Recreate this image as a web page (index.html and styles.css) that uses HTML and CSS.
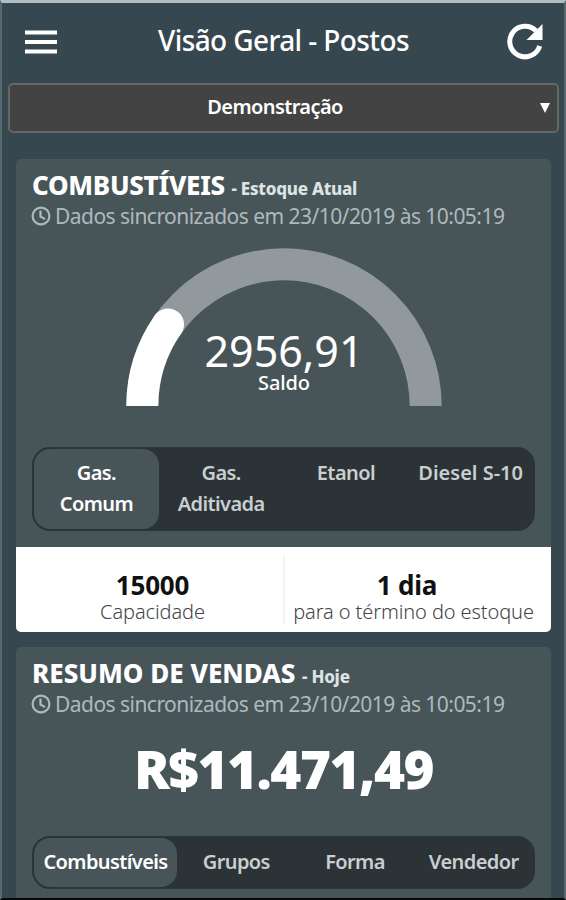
FILE: index.html
```html
<!DOCTYPE html>
<html lang="pt-BR">
<head>
    <meta charset="UTF-8">
    <meta name="viewport" content="width=device-width, initial-scale=1.0">
    <title>Visão Geral - Postos</title>
    <link rel="stylesheet" href="styles.css">
</head>
<body>
    <div class="app">
        <header class="topbar">
            <svg class="icon-menu" width="34" height="26" viewBox="0 0 34 26">
                <path d="M1 3.5h32M1 13h32M1 22.5h32" stroke="#fff" stroke-width="3.8"/>
            </svg>
            <h1>Visão Geral - Postos</h1>
            <svg class="icon-refresh" width="38" height="38" viewBox="0 0 38 38">
                <path d="M30 7.8A15.3 15.3 0 1 0 33.7 23" fill="none" stroke="#fff" stroke-width="5"/>
                <path d="M36.5 1v16H20.5z" fill="#fff"/>
            </svg>
        </header>

        <!-- Company -->
        <div class="select">
            <span class="select-value">Demonstração</span>
            <svg class="arrow" width="10" height="10" viewBox="0 0 10 10"><path d="M0 0h10L5 10z" fill="#fff"/></svg>
        </div>

        <!-- Stock -->
        <section class="card">
            <h2>COMBUSTÍVEIS <small>- Estoque Atual</small></h2>
            <p class="sync">
                <svg width="20" height="20" viewBox="0 0 20 20" fill="none" stroke="#aeb9bc" stroke-width="2.2">
                    <circle cx="10" cy="10" r="8.4"/>
                    <path d="M9.5 4.5v6l4.5 2.6"/>
                </svg>
                <span>Dados sincronizados em 23/10/2019 às 10:05:19</span>
            </p>
            <div class="gauge">
                <svg width="316" height="158" viewBox="0 0 316 158" fill="none" stroke-width="32">
                    <path d="M16.3 158A141.7 141.7 0 0 1 299.7 158" stroke="#92999c"/>
                    <path d="M16.3 158A141.7 141.7 0 0 1 42 76.4" stroke="#fff"/>
                    <circle cx="42" cy="76.4" r="16" fill="#fff" stroke="none"/>
                </svg>
                <div class="gauge-text">
                    <div class="gauge-value">2956,91</div>
                    <div class="gauge-label">Saldo</div>
                </div>
            </div>
            <div class="tabs">
                <div class="tab active">Gas.<br>Comum</div>
                <div class="tab">Gas.<br>Aditivada</div>
                <div class="tab">Etanol</div>
                <div class="tab diesel">Diesel S-10</div>
            </div>
            <div class="totals">
                <div class="total">
                    <strong>15000</strong>
                    <span>Capacidade</span>
                </div>
                <div class="total">
                    <strong class="days">1 dia</strong>
                    <span>para o término do estoque</span>
                </div>
            </div>
        </section>

        <!-- Sales -->
        <section class="card card-sales">
            <h2 class="sales-title">RESUMO DE VENDAS <small>- Hoje</small></h2>
            <p class="sync">
                <svg width="20" height="20" viewBox="0 0 20 20" fill="none" stroke="#aeb9bc" stroke-width="2.2">
                    <circle cx="10" cy="10" r="8.4"/>
                    <path d="M9.5 4.5v6l4.5 2.6"/>
                </svg>
                <span>Dados sincronizados em 23/10/2019 às 10:05:19</span>
            </p>
            <div class="amount">R$11.471,49</div>
            <div class="tabs tabs-sales">
                <div class="tab active">Combustíveis</div>
                <div class="tab">Grupos</div>
                <div class="tab">Forma</div>
                <div class="tab">Vendedor</div>
            </div>
        </section>
    </div>
</body>
</html>
```
FILE: styles.css
```css
* {
    box-sizing: border-box;
}
body {
    margin: 0;
    font-family: "Noto Sans", "Open Sans", sans-serif;
    color: #fff;
    background-color: #37474f;
}
h1, h2, p {
    margin: 0;
    white-space: nowrap;
}
svg {
    display: block;
    flex: none;
}
.app {
    height: 900px;
    overflow: hidden;
    border: 2px solid #58686f;
    border-top: 3px solid #b3bcbf;
    border-bottom: 2px solid #050809;
}
.topbar {
    display: flex;
    align-items: center;
    justify-content: space-between;
    height: 80px;
    padding: 0 20px 3px 22px;
}
.topbar h1 {
    padding: 0 0 3px 3px;
    font-size: 28px;
    font-weight: 500;
    line-height: 38px;
    letter-spacing: -0.6px;
}
.select {
    display: flex;
    align-items: center;
    height: 50px;
    margin: 0 5px 0 6px;
    padding: 0 7px 0 0;
    border: 2px solid #626866;
    border-radius: 5px;
    background-color: #434343;
    font-size: 20px;
    font-weight: 600;
    letter-spacing: -0.6px;
}
.select-value {
    flex: 1;
    padding-bottom: 3px;
    text-align: center;
}
.card {
    margin: 26px 13px 0 14px;
    padding-top: 11px;
    border-radius: 5px;
    background-color: #475559;
    overflow: hidden;
}
.card h2 {
    padding-left: 16px;
    font-size: 26px;
    font-weight: 800;
    line-height: 30px;
    letter-spacing: -0.3px;
}
.card .sales-title {
    letter-spacing: 0;
}
.card small {
    font-size: 17px;
    letter-spacing: -0.25px;
    color: #dde2e3;
}
.sync {
    display: flex;
    align-items: center;
    gap: 4px;
    height: 30px;
    margin-top: -3px;
    padding-left: 15px;
    font-size: 21px;
    letter-spacing: -0.54px;
    color: #aeb9bc;
}
.gauge {
    position: relative;
    width: 316px;
    height: 158px;
    margin: 17px 0 0 110px;
}
.gauge-text {
    position: absolute;
    top: 78px;
    width: 100%;
    text-align: center;
}
.gauge-value {
    font-size: 43px;
    font-weight: 400;
    line-height: 50px;
}
.gauge-label {
    font-size: 20px;
    font-weight: 500;
    line-height: 14px;
    letter-spacing: -0.1px;
}
.tabs {
    display: grid;
    grid-template-columns: repeat(4, 1fr);
    height: 84px;
    margin: 41px 16px 0;
    padding: 2px;
    border-radius: 18px;
    background-color: #2b3336;
}
.tab {
    padding-top: 8px;
    border-radius: 16px;
    font-size: 20px;
    font-weight: 600;
    line-height: 31px;
    text-align: center;
    letter-spacing: -0.6px;
    white-space: nowrap;
    color: #c9cecf;
}
.tab.active {
    color: #fff;
    background-color: #475559;
}
.tab.diesel {
    letter-spacing: 0;
}
.totals {
    display: grid;
    grid-template-columns: 267px 1fr;
    height: 85px;
    margin-top: 16px;
    padding: 8px 0;
    background-color: #fff;
}
.total {
    display: flex;
    flex-direction: column;
    align-items: center;
    padding: 15px 0 0 6px;
    color: #111;
}
.total + .total {
    border-left: 2px solid #f4f4f4;
    padding: 15px 9px 0 0;
}
.total strong {
    font-size: 26px;
    line-height: 30px;
    letter-spacing: -0.2px;
}
.total .days {
    padding-right: 13px;
}
.total span {
    font-size: 20px;
    font-weight: 300;
    line-height: 24px;
    letter-spacing: -0.1px;
    white-space: nowrap;
    color: #444;
}
.card-sales {
    height: 270px;
    margin-top: 15px;
}
.amount {
    height: 76px;
    margin-top: 12px;
    font-size: 53px;
    font-weight: 900;
    line-height: 76px;
    letter-spacing: -1.5px;
    text-align: center;
}
.tabs-sales {
    grid-template-columns: 143px 1fr 1fr 1fr;
    height: 53px;
    margin-top: 29px;
}
```
